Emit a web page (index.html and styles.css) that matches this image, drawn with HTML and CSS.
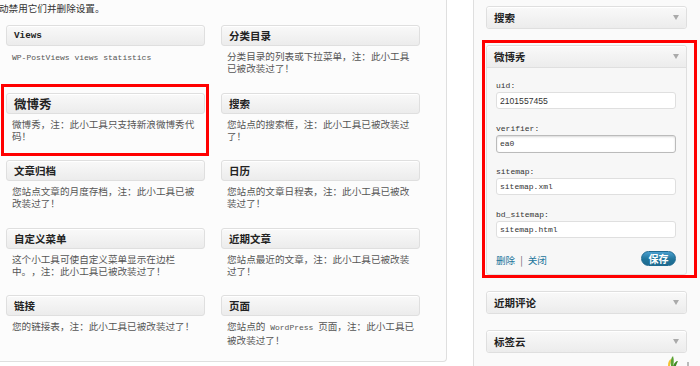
FILE: index.html
```html
<!DOCTYPE html>
<html lang="zh-CN">
<head>
    <meta charset="UTF-8">
    <meta name="viewport" content="width=device-width, initial-scale=1.0">
    <title>小工具</title>
    <link rel="stylesheet" href="styles.css">
</head>
<body>

    <div class="page">
        <div class="available">
            <div class="holder">
                <p class="intro">动禁用它们并删除设置。</p>
                <div class="widget-list">
                    <div class="widget">
                        <div class="widget-title en">Views</div>
                        <div class="widget-desc"><span class="en">WP-PostViews views statistics</span></div>
                    </div>
                    <div class="widget">
                        <div class="widget-title">分类目录</div>
                        <div class="widget-desc">分类目录的列表或下拉菜单，注：此小工具已被改装过了！</div>
                    </div>
                    <div class="widget">
                        <div class="widget-title big">微博秀</div>
                        <div class="widget-desc">微博秀，注：此小工具只支持新浪微博秀代码！</div>
                        <div class="mark mark-left"></div>
                    </div>
                    <div class="widget">
                        <div class="widget-title">搜索</div>
                        <div class="widget-desc">您站点的搜索框，注：此小工具已被改装过了！</div>
                    </div>
                    <div class="widget">
                        <div class="widget-title">文章归档</div>
                        <div class="widget-desc">您站点文章的月度存档，注：此小工具已被改装过了！</div>
                    </div>
                    <div class="widget">
                        <div class="widget-title">日历</div>
                        <div class="widget-desc">您站点的文章日程表，注：此小工具已被改装过了！</div>
                    </div>
                    <div class="widget">
                        <div class="widget-title">自定义菜单</div>
                        <div class="widget-desc">这个小工具可使自定义菜单显示在边栏中。，注：此小工具已被改装过了！</div>
                    </div>
                    <div class="widget">
                        <div class="widget-title">近期文章</div>
                        <div class="widget-desc">您站点最近的文章，注：此小工具已被改装过了！</div>
                    </div>
                    <div class="widget">
                        <div class="widget-title">链接</div>
                        <div class="widget-desc">您的链接表，注：此小工具已被改装过了！</div>
                    </div>
                    <div class="widget">
                        <div class="widget-title">页面</div>
                        <div class="widget-desc">您站点的<span class="en"> WordPress </span>页面，注：此小工具已被改装过了！</div>
                    </div>
                </div>
            </div>
        </div>

        <div class="sidebar">
            <div class="sb-widget">
                <div class="sb-head"><span>搜索</span><i class="arrow"></i></div>
            </div>

            <div class="sb-widget open">
                <div class="sb-head"><span>微博秀</span><i class="arrow"></i></div>
                <div class="sb-body">
                    <div class="field">
                        <label>uid:</label>
                        <input type="text" class="num" value="2101557455">
                    </div>
                    <div class="field">
                        <label>verifier:</label>
                        <input type="text" class="focus" value="ea0">
                    </div>
                    <div class="field">
                        <label>sitemap:</label>
                        <input type="text" value="sitemap.xml">
                    </div>
                    <div class="field">
                        <label>bd_sitemap:</label>
                        <input type="text" value="sitemap.html">
                    </div>
                    <div class="sb-foot">
                        <div class="links"><a href="#">删除</a><span class="sep">|</span><a href="#">关闭</a></div>
                        <button class="save">保存</button>
                    </div>
                </div>
                <div class="mark mark-right"></div>
            </div>

            <div class="sb-widget">
                <div class="sb-head"><span>近期评论</span><i class="arrow"></i></div>
            </div>

            <div class="sb-widget">
                <div class="sb-head"><span>标签云</span><i class="arrow"></i></div>
            </div>

            <svg class="logo" width="34" height="12" viewBox="0 0 34 12">
                <path d="M9 12 C9 8 10 6 12 5 C12 8 11 10 11 12 Z" fill="#f2c230"/>
                <path d="M12 12 C11 8 12 4 14 2 C15 5 15 9 14 12 Z" fill="#5aa233"/>
                <path d="M14 12 C15 9 17 7 19 7 C18 9 17 11 17 12 Z" fill="#3f8a25"/>
                <rect x="28" y="8" width="2" height="4" fill="#bbb"/>
            </svg>
        </div>
    </div>

</body>
</html>
```

FILE: styles.css
```css
body {
    margin: 0;
    font-family: "Noto Sans CJK SC", sans-serif;
    font-size: 9.6px;
    color: #333;
    background: #fff;
    overflow: hidden;
    text-spacing-trim: space-all;
}
.page {
    display: flex;
    height: 366px;
}
.available {
    width: 473px;
    flex: none;
}
.holder {
    box-sizing: border-box;
    width: 457px;
    height: 362px;
    margin-left: -10px;
    padding: 1px 25px 0 15px;
    background: #fcfcfc;
    border: 1px solid #dfdfdf;
    border-top: none;
    border-bottom-right-radius: 4px;
}
.intro {
    margin: 0 0 11px -7px;
    padding-top: 1px;
    line-height: 12px;
}
.widget-list {
    display: grid;
    grid-template-columns: 199px 199px;
    grid-auto-rows: 47.5px;
    column-gap: 16px;
    row-gap: 20px;
}
.widget {
    position: relative;
}
.widget-title {
    box-sizing: border-box;
    height: 21px;
    padding: 0 7px;
    line-height: 19px;
    font-size: 10.5px;
    font-weight: bold;
    color: #222;
    border: 1px solid #dfdfdf;
    border-radius: 3px;
    background: linear-gradient(#f9f9f9, #ececec);
    box-shadow: inset 0 1px 0 #fff;
}
.widget-title.big {
    font-size: 12.5px;
}
.widget-title.en {
    font-family: "Liberation Mono", monospace;
    font-size: 9.3px;
}
.widget-desc {
    margin-top: 4px;
    padding: 0 5px 0 6px;
    line-height: 12px;
    color: #555;
}
.en {
    font-family: "Liberation Mono", monospace;
    font-size: 8px;
}
.mark {
    position: absolute;
    border: 3px solid #f00;
    pointer-events: none;
}
.mark-left {
    top: -9px;
    left: -5px;
    right: -4px;
    bottom: -15.5px;
}
.mark-right {
    top: -6px;
    left: -5px;
    right: -11px;
    bottom: -4px;
}

/* sidebar */
.sidebar {
    flex: 1;
    position: relative;
    padding: 6px 12px 0 12px;
    border-left: 1px solid #dfdfdf;
    background: #fafafa;
}
.sb-widget {
    position: relative;
    width: 201px;
    box-sizing: border-box;
    margin-bottom: 16px;
    border: 1px solid #dfdfdf;
    border-radius: 3px;
    background: #f7f7f7;
}
.sb-head {
    height: 21px;
    display: flex;
    align-items: center;
    justify-content: space-between;
    padding: 0 7px 0 7px;
    font-size: 10.5px;
    font-weight: bold;
    color: #222;
    border-radius: 3px;
    background: linear-gradient(#f9f9f9, #ececec);
    box-shadow: inset 0 1px 0 #fff;
}
.open .sb-head {
    border-bottom: 1px solid #dfdfdf;
    border-radius: 3px 3px 0 0;
}
.arrow {
    width: 0;
    height: 0;
    border-left: 3.5px solid transparent;
    border-right: 3.5px solid transparent;
    border-top: 5px solid #aaa;
}
.sb-body {
    padding: 12px 9px 8px 9px;
}
.field {
    margin-bottom: 13.5px;
}
.field:last-of-type {
    margin-bottom: 11.5px;
}
.field label {
    display: block;
    line-height: 12px;
    font-family: "Liberation Mono", monospace;
    font-size: 8px;
    color: #333;
}
.field input {
    display: block;
    box-sizing: border-box;
    width: 180px;
    height: 17px;
    margin: 0;
    padding: 0 3px;
    font-family: "Liberation Mono", monospace;
    font-size: 8px;
    color: #333;
    background: #fff;
    border: 1px solid #dfdfdf;
    border-radius: 3px;
    outline: none;
}
.field input.num {
    font-family: "Liberation Sans", sans-serif;
    font-size: 8.6px;
}
.field input.focus {
    height: 18px;
    border-color: #bbb;
    box-shadow: inset 0 1px 2px rgba(0, 0, 0, 0.15);
}
.sb-foot {
    display: flex;
    align-items: center;
    justify-content: space-between;
    height: 15px;
}
.links {
    padding-top: 2px;
}
.links a {
    color: #21759b;
    text-decoration: none;
}
.sep {
    margin: 0 5px;
    color: #666;
}
.save {
    width: 35px;
    height: 15px;
    margin-right: 1px;
    padding: 0;
    font-family: inherit;
    font-size: 10px;
    font-weight: bold;
    line-height: 13px;
    color: #fff;
    border: 1px solid #1f6a91;
    border-radius: 8px;
    background: linear-gradient(#4a9fcf, #21759b 55%, #1d6a8f);
}
.logo {
    position: absolute;
    left: 185px;
    bottom: 0;
}
```
